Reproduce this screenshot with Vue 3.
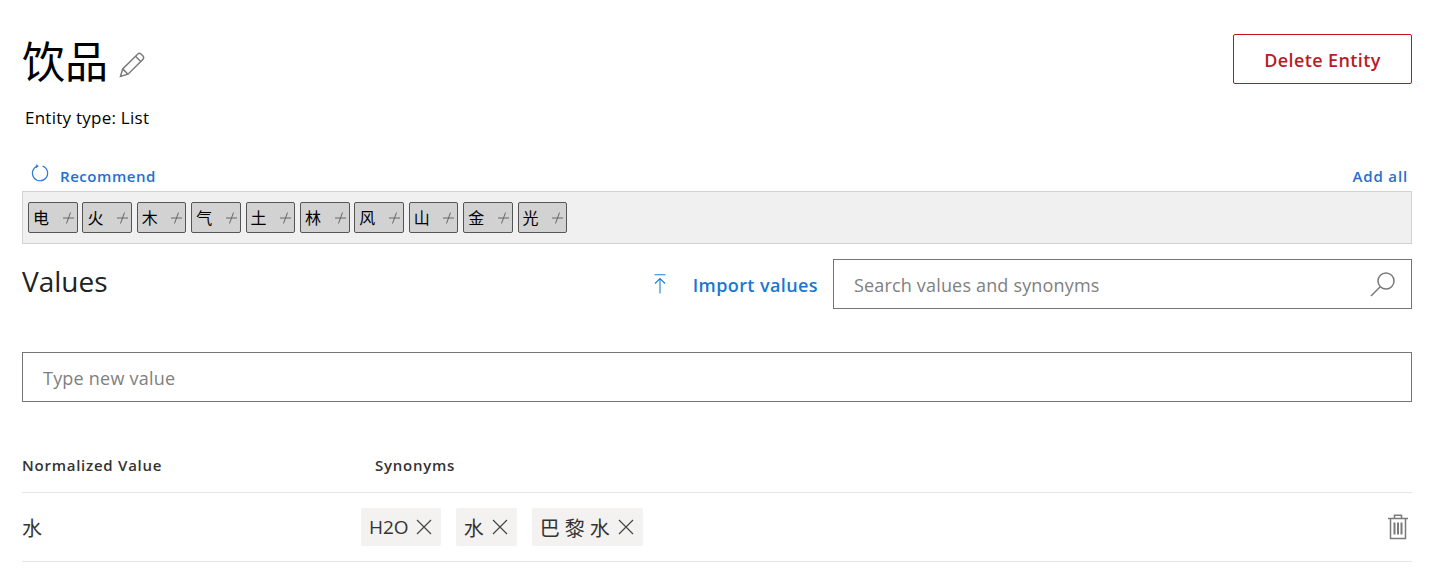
<template>
  <div class="page">
    <header class="head">
      <div>
        <div class="title-row">
          <h1>{{ entity.name }}</h1>
          <svg class="pencil" viewBox="0 0 26 26" fill="none" stroke="#7a7a7a" stroke-width="1.5">
            <path d="M1.5 24.5l2.2-7.6L18.6 2.2a2.6 2.6 0 013.6 0l1.6 1.6a2.6 2.6 0 010 3.6L9 22.2z" />
            <path d="M3.7 16.9l5.3 5.3M16.5 4.3l5.2 5.2" />
          </svg>
        </div>
        <p class="type">Entity type: {{ entity.type }}</p>
      </div>
      <button class="delete">Delete Entity</button>
    </header>

    <!-- Recommendations -->
    <div class="rec-head">
      <span class="rec-left">
        <svg class="refresh" viewBox="0 0 18 18" fill="none" stroke="#2b78d8" stroke-width="1.2">
          <path d="M6.2 2.1a7.6 7.6 0 105.4-.1" />
          <path d="M5.2 .6l1.6 1.6-2 1.4" />
        </svg>
        <a class="rec-link">Recommend</a>
      </span>
      <a class="rec-link add-all">Add all</a>
    </div>
    <div class="rec-bar">
      <button v-for="word in recommended" :key="word" class="chip">
        <span>{{ word }}</span>
        <svg viewBox="0 0 11 12" fill="none" stroke="#666" stroke-width="1">
          <path d="M0 6h11M7.5 .5L3.5 11.5" />
        </svg>
      </button>
    </div>

    <!-- Values toolbar -->
    <div class="values-head">
      <h2>Values</h2>
      <div class="tools">
        <svg class="upload" viewBox="0 0 16 20" fill="none" stroke="#1e7fd6" stroke-width="1.1">
          <path d="M2.5 .8h11M8 4.5v15M3 9.5L8 4.5l5 5" />
        </svg>
        <a class="import">Import values</a>
        <div class="search">
          <input placeholder="Search values and synonyms" />
          <svg viewBox="0 0 26 26" fill="none" stroke="#7a7a7a" stroke-width="1.5">
            <circle cx="16" cy="10" r="8" />
            <path d="M10.2 15.8L1 25" />
          </svg>
        </div>
      </div>
    </div>

    <input class="new-value" placeholder="Type new value" />

    <!-- Table -->
    <div class="row row-head">
      <div class="col-name">Normalized Value</div>
      <div class="col-syn">Synonyms</div>
    </div>
    <div v-for="v in values" :key="v.name" class="row row-body">
      <div class="col-name">{{ v.name }}</div>
      <div class="tags">
        <span v-for="s in v.synonyms" :key="s" class="tag" :class="{ cjk: isCjk(s) }">
          {{ s }}
          <svg viewBox="0 0 16 16" fill="none" stroke="#444" stroke-width="1.2">
            <path d="M1 1l14 14M15 1L1 15" />
          </svg>
        </span>
      </div>
      <svg class="trash" viewBox="0 0 20 26" fill="none" stroke="#7a7a7a" stroke-width="1.5">
        <path d="M0 4.5h20M6.5 4.5V1.2h7v3.3M2.5 4.5v20h15v-20" />
        <path d="M6.5 8.5v12M10 8.5v12M13.5 8.5v12" stroke-width="2" />
      </svg>
    </div>
  </div>
</template>

<script setup>
const entity = { name: '饮品', type: 'List' }

const recommended = ['电', '火', '木', '气', '土', '林', '风', '山', '金', '光']

const values = [
  { name: '水', synonyms: ['H2O', '水', '巴黎水'] }
]

const isCjk = (s) => /[\u4e00-\u9fff]/.test(s)
</script>

<style>
html, body { background: #fff; }
</style>

<style scoped>
.page {
  padding: 34px 34px 0 22px;
  font-family: "Open Sans", "Noto Sans CJK SC", sans-serif;
  color: #000;
}

/* ─── Header ───────────────────────────────────────────────────────── */
.head {
  display: flex;
  justify-content: space-between;
  align-items: flex-start;
  height: 125px;
}
.title-row {
  display: flex;
  align-items: center;
  gap: 11px;
  height: 56px;
}
h1 {
  margin: 0;
  font-size: 43px;
  font-weight: 400;
  line-height: 56px;
}
.pencil { width: 26px; height: 26px; margin-top: 6px; }
.type {
  margin: 16px 0 0 3px;
  font-size: 17px;
  line-height: 24px;
  letter-spacing: .25px;
}
.delete {
  width: 179px;
  height: 50px;
  padding-top: 2px;
  border: 1px solid #c50f1f;
  border-radius: 2px;
  background: #fff;
  color: #b91c26;
  font: 600 18px "Open Sans", sans-serif;
  letter-spacing: .4px;
}

/* ─── Recommendations ──────────────────────────────────────────────── */
.rec-head {
  display: flex;
  justify-content: space-between;
  align-items: center;
  height: 32px;
  padding: 0 4px 0 9px;
}
.rec-left { display: flex; align-items: center; gap: 11px; }
.refresh { width: 18px; height: 18px; margin-top: -4px; }
.rec-link {
  padding-top: 1px;
  color: #2470d0;
  font-size: 15px;
  font-weight: 600;
  letter-spacing: .55px;
}
.add-all { letter-spacing: .85px; }
.rec-bar {
  display: flex;
  gap: 4.8px;
  height: 53px;
  box-sizing: border-box;
  padding: 10px 5px;
  background: #f0f0f0;
  border: 1px solid #d2d2d2;
}
.chip {
  display: flex;
  justify-content: space-between;
  align-items: center;
  width: 49.6px;
  height: 31px;
  padding: 0 3px 2px 4px;
  box-sizing: border-box;
  background: #d2d2d2;
  border: 1px solid #555;
  border-radius: 2px;
  font: 16px "Noto Sans CJK SC", sans-serif;
  color: #000;
}
.chip svg { width: 11px; height: 12px; flex: none; margin-top: 2px; }

/* ─── Values toolbar ───────────────────────────────────────────────── */
.values-head {
  display: flex;
  justify-content: space-between;
  align-items: flex-start;
  margin-top: 15px;
}
h2 {
  margin: 0;
  font-size: 28px;
  font-weight: 400;
  line-height: 44px;
  color: #222;
}
.tools { display: flex; align-items: center; }
.upload { width: 16px; height: 20px; margin-right: 25px; }
.import {
  margin-right: 15px;
  padding-top: 1px;
  color: #1a77cf;
  font-size: 18px;
  font-weight: 600;
  letter-spacing: .4px;
}
.search {
  display: flex;
  align-items: center;
  width: 579px;
  height: 50px;
  box-sizing: border-box;
  padding: 0 15px 0 20px;
  border: 1px solid #757575;
}
.search input {
  flex: 1;
  min-width: 0;
  border: none;
  outline: none;
  padding: 2px 0 0;
  font: 18px "Open Sans", sans-serif;
  letter-spacing: .17px;
}
.search svg { width: 26px; height: 26px; }
.new-value {
  display: block;
  width: 100%;
  height: 50px;
  margin-top: 43px;
  box-sizing: border-box;
  padding: 2px 20px 0;
  border: 1px solid #757575;
  outline: none;
  font: 18px "Open Sans", sans-serif;
  letter-spacing: .22px;
}
input::placeholder { color: #808080; opacity: 1; }

/* ─── Table ────────────────────────────────────────────────────────── */
.row {
  display: flex;
  align-items: center;
  border-bottom: 1px solid #e5e5e5;
}
.row-head {
  height: 91px;
  box-sizing: border-box;
  padding-top: 35px;
  font-size: 15px;
  font-weight: 600;
  color: #333;
  letter-spacing: .75px;
}
.col-name { width: 339px; flex: none; }
.col-syn { margin-left: 14px; }
.row-body { height: 68px; box-sizing: content-box; color: #333; font-size: 20px; letter-spacing: 0; }
.tags { display: flex; gap: 15px; flex: 1; }
.tag {
  display: flex;
  align-items: center;
  gap: 7px;
  height: 38px;
  padding: 0 9px 0 8px;
  background: #f3f2f1;
  border-radius: 2px;
  font-size: 19px;
  color: #333;
}
.tag.cjk {
  gap: 3px;
  font-size: 20px;
  letter-spacing: 5px;
}
.tag svg { width: 16px; height: 16px; }
.trash { width: 20px; height: 26px; margin-right: 4px; }
</style>
